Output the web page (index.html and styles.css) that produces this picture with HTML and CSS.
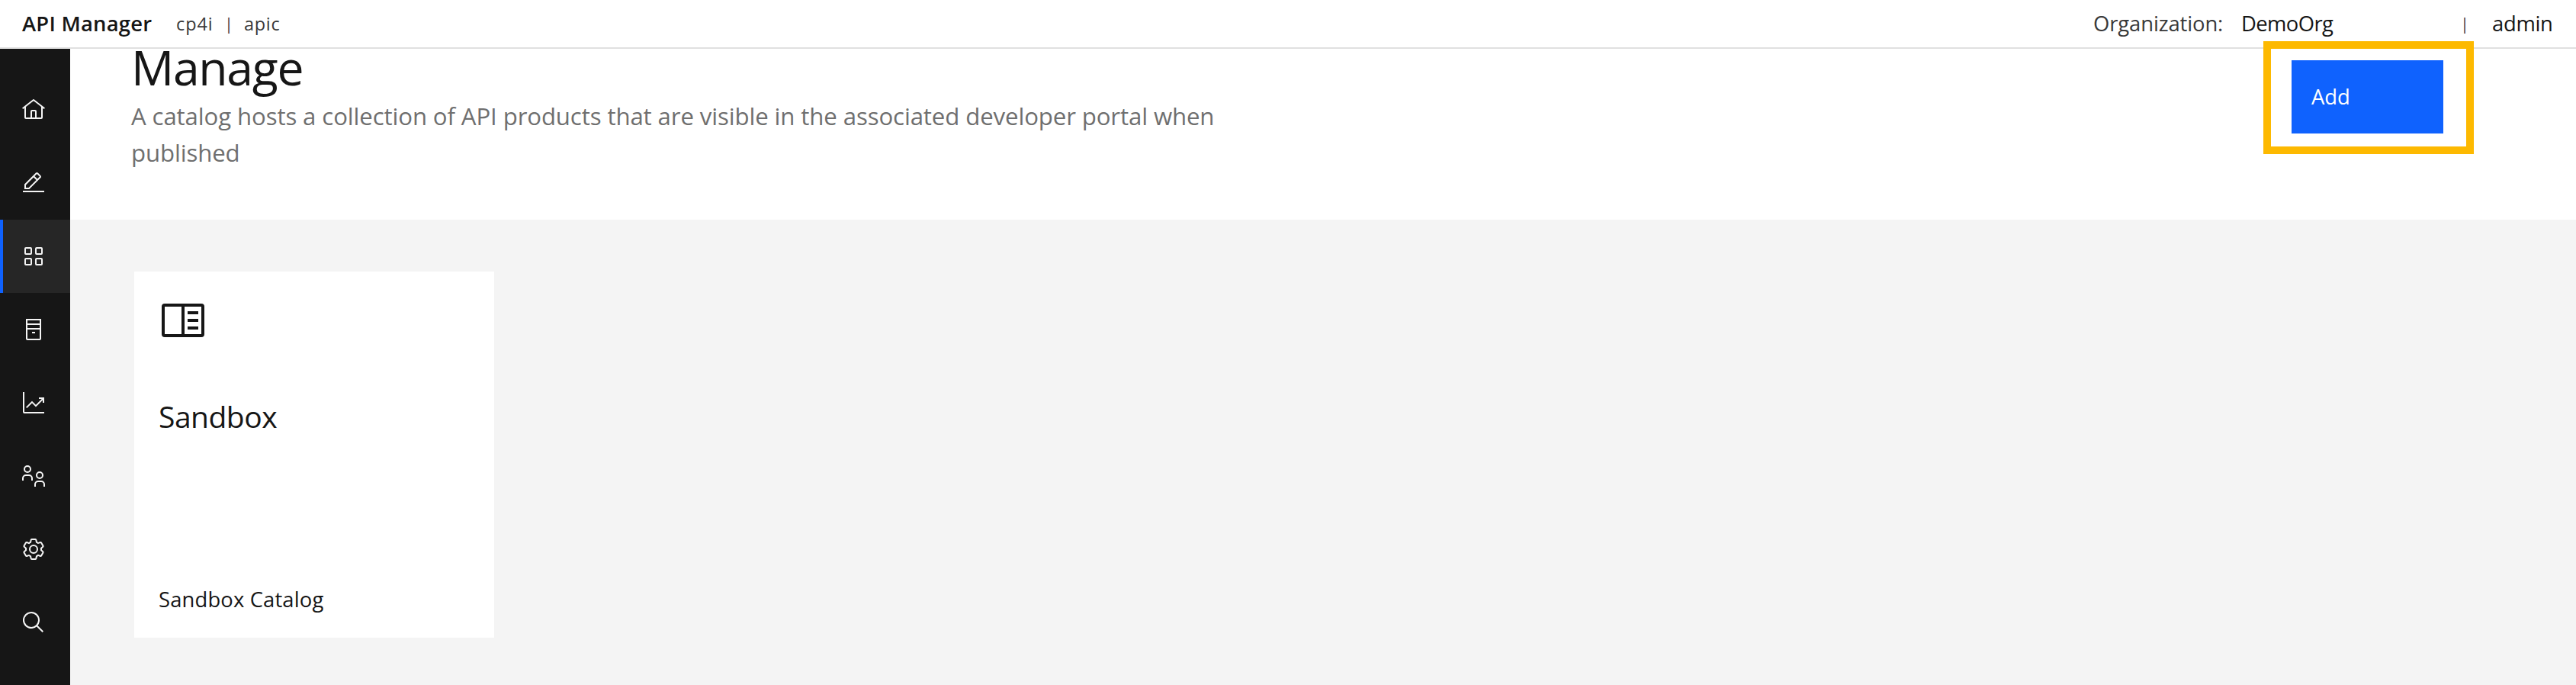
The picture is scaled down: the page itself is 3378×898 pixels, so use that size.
FILE: index.html
```html
<!DOCTYPE html>
<html lang="en">
<head>
<meta charset="utf-8">
<title>API Manager</title>
<link rel="stylesheet" href="styles.css">
</head>
<body>
<header class="header">
  <span class="product">API Manager</span>
  <span class="crumb crumb-first">cp4i</span>
  <span class="pipe">|</span>
  <span class="crumb crumb-last">apic</span>
  <div class="header-right">
    <span class="org-label">Organization:</span>
    <span class="org-name">DemoOrg</span>
    <span class="pipe">|</span>
    <span class="user">admin</span>
  </div>
</header>
<div class="shell">
  <nav class="sidebar">
    <a class="nav-item"><svg class="icon" viewBox="0 0 32 32"><path d="M16.6123,2.2138a1.01,1.01,0,0,0-1.2427,0L1,13.4194l1.2427,1.5717L4,13.6209V26a2.0041,2.0041,0,0,0,2,2H26a2.0037,2.0037,0,0,0,2-2V13.63L29.7573,15,31,13.4282ZM18,26H14V18h4Zm2,0V18a2.0023,2.0023,0,0,0-2-2H14a2.002,2.002,0,0,0-2,2v8H6V12.0615l10-7.79,10,7.8005V26Z"/></svg></a>
    <a class="nav-item"><svg class="icon" viewBox="0 0 32 32"><path d="M2 26H30V28H2zM25.4 9c.8-.8.8-2 0-2.8l-3.6-3.6c-.8-.8-2-.8-2.8 0l-15 15V24h6.4L25.4 9zM20.4 4L24 7.6l-3 3L17.4 7 20.4 4zM6 22v-3.6l10-10 3.6 3.6-10 10H6z"/></svg></a>
    <a class="nav-item active"><svg class="icon" viewBox="0 0 32 32"><g class="line"><rect x="5" y="5" width="8" height="8" rx="1"/><rect x="19" y="5" width="8" height="8" rx="1"/><rect x="5" y="19" width="8" height="8" rx="1"/><rect x="19" y="19" width="8" height="8" rx="1"/></g></svg></a>
    <a class="nav-item"><svg class="icon" viewBox="0 0 32 32"><path class="line" d="M7 3H25V28A1 1 0 0 1 24 29H8A1 1 0 0 1 7 28ZM7 9H25M7 15H25M14 20H18"/></svg></a>
    <a class="nav-item"><svg class="icon" viewBox="0 0 32 32"><path class="line" d="M3 2V28A1 1 0 0 0 4 29H30M6.7 22.4L14 15.1L19 20.1L28.4 10.7M23 10H29V16"/></svg></a>
    <a class="nav-item"><svg class="icon" viewBox="0 0 32 32"><g class="line"><circle cx="8" cy="7" r="4"/><path d="M2 22V19A4 4 0 0 1 6 15H10A4 4 0 0 1 14 19V22"/><circle cx="24" cy="15" r="4"/><path d="M18 30V27A4 4 0 0 1 22 23H26A4 4 0 0 1 30 27V30"/></g></svg></a>
    <a class="nav-item"><svg class="icon" viewBox="0 0 32 32"><path d="M27,16.76c0-.25,0-.5,0-.76s0-.51,0-.77l1.92-1.68A2,2,0,0,0,29.3,11L26.94,7a2,2,0,0,0-1.73-1,2,2,0,0,0-.64.1l-2.43.82a11.35,11.35,0,0,0-1.31-.75l-.51-2.52a2,2,0,0,0-2-1.61H13.64a2,2,0,0,0-2,1.61l-.51,2.52a11.48,11.48,0,0,0-1.32.75L7.43,6.06A2,2,0,0,0,6.79,6,2,2,0,0,0,5.06,7L2.7,11a2,2,0,0,0,.41,2.51L5,15.24c0,.25,0,.5,0,.76s0,.51,0,.77L3.11,18.45A2,2,0,0,0,2.7,21L5.06,25a2,2,0,0,0,1.73,1,2,2,0,0,0,.64-.1l2.43-.82a11.35,11.35,0,0,0,1.31.75l.51,2.52a2,2,0,0,0,2,1.61h4.72a2,2,0,0,0,2-1.61l.51-2.52a11.48,11.48,0,0,0,1.32-.75l2.42.82a2,2,0,0,0,.64.1,2,2,0,0,0,1.73-1L29.3,21a2,2,0,0,0-.41-2.51ZM25.21,24l-3.43-1.16a8.86,8.86,0,0,1-2.71,1.57L18.36,28H13.64l-.71-3.55a9.36,9.36,0,0,1-2.7-1.57L6.79,24,4.43,20l2.72-2.4a8.9,8.9,0,0,1,0-3.13L4.43,12,6.79,8l3.43,1.16a8.86,8.86,0,0,1,2.71-1.57L13.64,4h4.72l.71,3.55a9.36,9.36,0,0,1,2.7,1.57L25.21,8,27.57,12l-2.72,2.4a8.9,8.9,0,0,1,0,3.13L27.57,20Z"/><circle class="line" cx="16" cy="16" r="5"/></svg></a>
    <a class="nav-item"><svg class="icon" viewBox="0 0 32 32"><path d="M29,27.5859l-7.5521-7.5521a11.0177,11.0177,0,1,0-1.4141,1.4141L27.5859,29ZM4,13a9,9,0,1,1,9,9A9.01,9.01,0,0,1,4,13Z"/></svg></a>
  </nav>
  <main class="content">
    <section class="banner">
      <div class="intro">
        <h1 class="title">Manage</h1>
        <p class="description">A catalog hosts a collection of API products that are visible in the associated developer portal when published</p>
      </div>
      <div class="action">
        <button class="add">Add</button>
        <div class="highlight"></div>
      </div>
    </section>
    <section class="cards">
      <article class="card">
        <svg class="card-icon" viewBox="0 0 32 32"><path class="line" d="M4 6H28A1 1 0 0 1 29 7V25A1 1 0 0 1 28 26H4A1 1 0 0 1 3 25V7A1 1 0 0 1 4 6ZM16 6V26M19 11H26M19 16H26M19 21H26"/></svg>
        <h2 class="card-title">Sandbox</h2>
        <p class="card-sub">Sandbox Catalog</p>
      </article>
    </section>
  </main>
</div>
</body>
</html>
```
FILE: styles.css
```css
* { box-sizing: border-box; }
body {
  margin: 0;
  height: 898px;
  overflow: hidden;
  display: flex;
  flex-direction: column;
  background: #fff;
  color: #161616;
  font-family: "Open Sans", sans-serif;
  font-size: 27.4px;
}
h1, h2, p { margin: 0; font-weight: 400; }

.header {
  position: relative;
  z-index: 1;
  flex: none;
  display: flex;
  align-items: center;
  height: 64px;
  padding: 0 30px 0 29px;
  background: #fff;
  border-bottom: 2px solid #e0e0e0;
  line-height: 62px;
  white-space: nowrap;
}
.product { width: 202px; font-weight: 600; letter-spacing: 0.25px; }
.crumb { font-size: 23.5px; color: #393939; }
.crumb-first { width: 63px; letter-spacing: 0.9px; }
.crumb-last { margin-left: 14px; letter-spacing: 0.7px; }
.pipe { width: 12px; text-align: center; font-size: 21px; color: #393939; }
.header-right { display: flex; align-items: center; margin-left: auto; width: 603px; }
.org-label { width: 194px; color: #393939; letter-spacing: -0.1px; }
.org-name { width: 287px; letter-spacing: -0.6px; }
.user { margin-left: 30px; letter-spacing: -0.3px; }

.shell { flex: 1; min-height: 0; display: flex; }
.sidebar { flex: none; width: 92px; padding-top: 32px; background: #161616; }
.nav-item { display: flex; align-items: center; height: 96px; padding-left: 28px; }
.active { background: #262626; padding-left: 24px; border-left: 4px solid #0f62fe; }
.icon { width: 32px; height: 32px; fill: #f4f4f4; stroke: #f4f4f4; stroke-width: 0; }
.line { fill: none; stroke-width: 2; }

.content { flex: 1; background: #f4f4f4; }
.banner {
  display: flex;
  justify-content: space-between;
  height: 224px;
  padding: 0 174px 0 80px;
  background: #fff;
}
.intro { width: 1440px; margin-top: -16px; }
.title { font-size: 62.5px; line-height: 80px; letter-spacing: -1.3px; }
.description { font-size: 31.2px; line-height: 48px; letter-spacing: -0.12px; color: #6f6f6f; }
.action { position: relative; margin-top: 15px; width: 199px; height: 96px; }
.add {
  display: block;
  width: 199px;
  height: 96px;
  padding: 0 26px 2px;
  border: 0;
  background: #0f62fe;
  color: #fff;
  font: inherit;
  text-align: left;
}
.highlight {
  position: absolute;
  z-index: 2;
  left: -37px;
  top: -25px;
  width: 276px;
  height: 148px;
  border: 10px solid #fdb900;
}

.cards { padding: 68px 84px 62px; }
.card {
  display: flex;
  flex-direction: column;
  width: 472px;
  height: 480px;
  padding: 32px;
  background: #fff;
}
.card-icon { flex: none; width: 64px; height: 64px; stroke: #161616; }
.card-title { margin-top: 69px; font-size: 39px; line-height: 50px; letter-spacing: -0.5px; }
.card-sub { margin-top: auto; line-height: 36px; letter-spacing: 0.15px; }
```
